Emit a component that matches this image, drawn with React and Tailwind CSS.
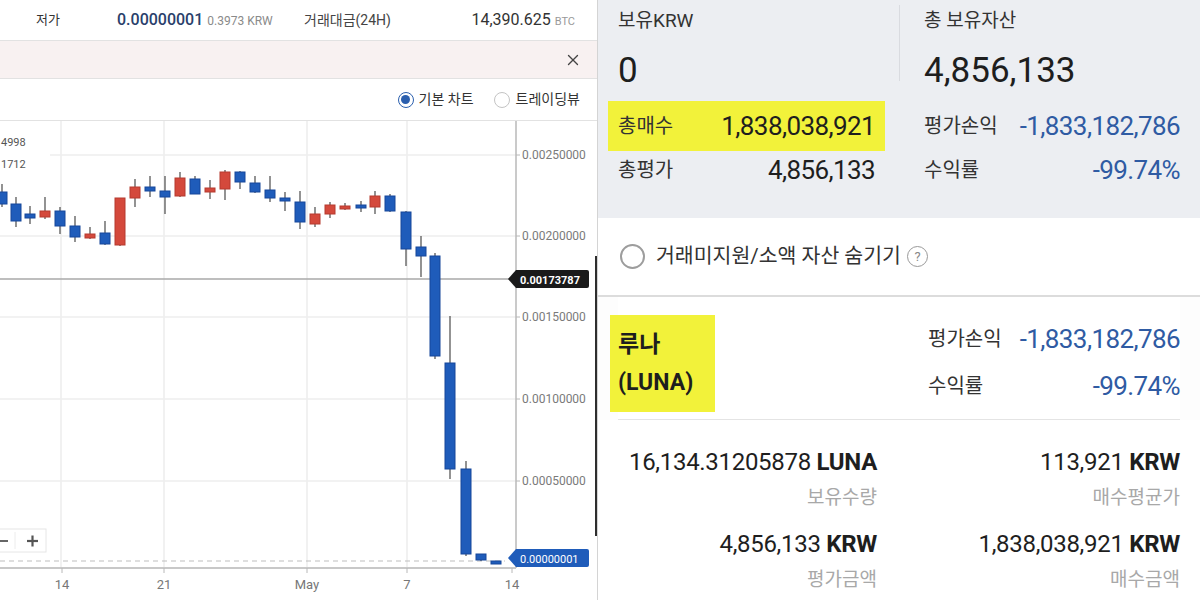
import { X } from "lucide-react";

const candles = [
  [2, 193, 205, 185, 208, "b"],
  [16, 205, 222, 198, 228, "b"],
  [30, 215, 219, 207, 225, "b"],
  [45, 212, 218, 198, 220, "r"],
  [60, 212, 227, 208, 235, "b"],
  [75, 227, 238, 217, 243, "b"],
  [90, 235, 239, 228, 240, "r"],
  [105, 234, 245, 222, 246, "b"],
  [120, 199, 246, 199, 247, "r"],
  [135, 188, 199, 180, 208, "r"],
  [150, 188, 192, 177, 198, "b"],
  [165, 192, 198, 177, 215, "b"],
  [180, 179, 197, 173, 198, "r"],
  [195, 180, 195, 177, 195, "b"],
  [210, 189, 193, 181, 200, "r"],
  [225, 173, 190, 171, 201, "r"],
  [240, 173, 183, 172, 190, "b"],
  [255, 184, 193, 177, 194, "b"],
  [270, 191, 199, 177, 203, "b"],
  [285, 199, 202, 193, 212, "b"],
  [300, 203, 223, 192, 230, "b"],
  [315, 215, 225, 208, 228, "r"],
  [330, 206, 215, 203, 219, "r"],
  [345, 207, 210, 204, 211, "r"],
  [361, 206, 208, 202, 213, "b"],
  [375, 197, 208, 192, 215, "r"],
  [390, 197, 212, 195, 213, "b"],
  [406, 213, 250, 212, 267, "b"],
  [421, 248, 257, 237, 278, "b"],
  [435, 257, 357, 254, 360, "b"],
  [450, 364, 470, 317, 480, "b"],
  [466, 470, 555, 462, 557, "b"],
  [481, 555, 561, 555, 562, "b"],
  [496, 562, 564, 562, 564, "b"],
];

const yLabels = [
  [156, "0.00250000"],
  [237, "0.00200000"],
  [318, "0.00150000"],
  [400, "0.00100000"],
  [482, "0.00050000"],
];

const xLabels = [
  [62, "14"],
  [164, "21"],
  [307, "May"],
  [407, "7"],
  [512, "14"],
];

const font = { fontFamily: "Roboto, 'Noto Sans CJK KR', sans-serif" };

const Chart = () => (
  <svg width="597" height="478" viewBox="0 122 597 478" className="block" style={font}>
    {[61, 164, 307, 407].map((x) => (
      <line key={x} x1={x} y1="122" x2={x} y2="568" stroke="#ececec" strokeWidth="1.5" />
    ))}
    {yLabels.map(([y]) => (
      <line key={y} x1="0" y1={y} x2="516" y2={y} stroke="#eeeeee" strokeWidth="1.5" />
    ))}
    <rect x="0" y="130" width="50" height="42" fill="#fff" />
    <text x="1" y="147" fontSize="11" fill="#555">4998</text>
    <text x="1" y="169" fontSize="11" fill="#555">1712</text>

    <line x1="0" y1="562" x2="505" y2="562" stroke="#bdbdbd" strokeWidth="1" strokeDasharray="5 4" />
    <line x1="0" y1="280" x2="510" y2="280" stroke="#a8a8a8" strokeWidth="1.5" />

    {candles.map(([cx, bt, bb, wt, wb, c]) => {
      const fill = c === "b" ? "#1f5cba" : "#d4493c";
      const stroke = c === "b" ? "#16479a" : "#b53a2f";
      const h = Math.max(bb - bt, 3);
      return (
        <g key={cx}>
          <line x1={cx} y1={wt} x2={cx} y2={wb} stroke="#4a4a4a" strokeWidth="1.2" />
          <rect x={cx - 5} y={bt} width="10" height={h} fill={fill} stroke={stroke} strokeWidth="1" />
        </g>
      );
    })}

    <line x1="516" y1="122" x2="516" y2="569" stroke="#b8b8b8" strokeWidth="1.5" />
    <line x1="0" y1="569" x2="516" y2="569" stroke="#c8c8c8" strokeWidth="2" />
    {yLabels.map(([y, t]) => (
      <g key={t}>
        <line x1="516" y1={y} x2="520" y2={y} stroke="#b8b8b8" />
        <text x="522" y={y + 4} fontSize="12" fill="#7a7a7a">{t}</text>
      </g>
    ))}
    {xLabels.map(([x, t]) => (
      <g key={x}>
        <line x1={x} y1="569" x2={x} y2="574" stroke="#b8b8b8" />
        <text x={x} y="590" textAnchor="middle" fontSize="13" fill="#777">{t}</text>
      </g>
    ))}

    <path d="M508,280 L516,271 L587,271 Q589,271 589,273 L589,287 Q589,289 587,289 L516,289 Z" fill="#1a1a1a" />
    <text x="520" y="284.5" fontSize="11" fontWeight="700" fill="#fff">0.00173787</text>
    <path d="M508,559 L516,550 L587,550 Q589,550 589,552 L589,566 Q589,568 587,568 L516,568 Z" fill="#1f5cba" />
    <text x="520" y="563.5" fontSize="11" fill="#fff">0.00000001</text>

    <rect x="-4" y="530" width="50" height="23" fill="#fff" stroke="#e6e6e6" />
    <line x1="15" y1="533" x2="15" y2="550" stroke="#ececec" />
    <line x1="0" y1="542" x2="8" y2="542" stroke="#666" strokeWidth="2" />
    <line x1="27" y1="542" x2="38" y2="542" stroke="#555" strokeWidth="2.2" />
    <line x1="32.5" y1="536.5" x2="32.5" y2="547.5" stroke="#555" strokeWidth="2.2" />

    <line x1="596" y1="257" x2="596" y2="537" stroke="#2e2e2e" strokeWidth="2" />
  </svg>
);

const Radio = ({ checked }) => (
  <span
    className={`w-[16px] h-[16px] rounded-full border flex items-center justify-center ${
      checked ? "border-[#2b5fae]" : "border-[#c4c4c4]"
    }`}
  >
    {checked && <span className="w-[9px] h-[9px] rounded-full bg-[#2b5fae]" />}
  </span>
);

const StatRow = ({ label, value, blue }) => (
  <div className="h-[38px] flex items-center justify-between">
    <span className="text-[20px] text-[#333]">{label}</span>
    <span className={`text-[26px] tracking-[-0.6px] ${blue ? "text-[#2f5ba3]" : "text-[#1e1e1e]"}`}>
      {value}
    </span>
  </div>
);

const Holding = ({ amount, unit, label }) => (
  <div className="flex flex-col items-end">
    <div className="h-[40px] flex items-center text-[24px] text-[#1e1e1e] tracking-[-0.3px]">
      {amount}&nbsp;<span className="font-bold">{unit}</span>
    </div>
    <div className="h-[32px] flex items-center text-[19px] text-[#a8a8a8]">{label}</div>
  </div>
);

export default function App() {
  return (
    <div className="flex w-[1200px] h-[600px] overflow-hidden bg-white" style={font}>
      {/* chart screen */}
      <div className="w-[598px] flex flex-col bg-white border-r border-[#d4d4d4]">
        <div className="h-[40px] flex items-center text-[13px] shrink-0">
          <span className="w-[117px] pl-[36px] text-[#333]">저가</span>
          <span className="w-[187px] flex items-baseline gap-[4px]">
            <span className="text-[16px] font-medium text-[#2a3f6b]">0.00000001</span>
            <span className="text-[12px] text-[#8a8a8a]">0.3973 KRW</span>
          </span>
          <span className="text-[14px] text-[#444]">거래대금(24H)</span>
          <span className="flex-1 flex items-baseline justify-end gap-[4px] pr-[22px]">
            <span className="text-[16px] text-[#333]">14,390.625</span>
            <span className="text-[11px] text-[#999]">BTC</span>
          </span>
        </div>
        <div className="h-[39px] shrink-0 bg-[#f8f1f1] border-y border-[#e2e2e2] flex items-center justify-end pr-[15px]">
          <X size={18} strokeWidth={1.8} className="text-[#444]" />
        </div>
        <div className="h-[42px] shrink-0 flex items-center justify-end pr-[17px] text-[14px] text-[#333] border-b border-[#e2e2e2]">
          <Radio checked />
          <span className="ml-[5px] mr-[20px]">기본 차트</span>
          <Radio />
          <span className="ml-[6px]">트레이딩뷰</span>
        </div>
        <div className="flex-1 overflow-hidden">
          <Chart />
        </div>
      </div>

      {/* assets screen */}
      <div className="flex-1 flex flex-col bg-[#fdfdfd]">
        <div className="h-[218px] shrink-0 bg-[#eceef2] flex pt-[9px]">
          <div className="ml-[10px] w-[277px] flex flex-col">
            <div className="px-[10px] h-[24px] flex items-center text-[19px] text-[#333]">보유KRW</div>
            <div className="px-[10px] mt-[18px] h-[40px] flex items-center text-[35px] text-[#1e1e1e]">0</div>
            <div className="mt-[10px] h-[50px] bg-[#f2f23a] px-[10px] flex items-center justify-between">
              <span className="text-[20px] text-[#333]">총매수</span>
              <span className="text-[26px] tracking-[-0.6px] text-[#1e1e1e]">1,838,038,921</span>
            </div>
            <div className="px-[10px]">
              <StatRow label="총평가" value="4,856,133" />
            </div>
          </div>
          <div className="ml-[14px] mt-[-4px] w-px h-[76px] bg-[#d9dbe0]" />
          <div className="flex-1 pl-[24px] pr-[20px] flex flex-col">
            <div className="h-[24px] flex items-center text-[19px] text-[#333]">총 보유자산</div>
            <div className="mt-[18px] h-[40px] flex items-center text-[35px] text-[#1e1e1e]">4,856,133</div>
            <div className="mt-[10px] h-[50px] flex items-center justify-between">
              <span className="text-[20px] text-[#333]">평가손익</span>
              <span className="text-[26px] tracking-[-0.6px] text-[#2f5ba3]">-1,833,182,786</span>
            </div>
            <StatRow label="수익률" value="-99.74%" blue />
          </div>
        </div>

        <div className="h-[79px] shrink-0 bg-white flex items-center pl-[22px] border-b-2 border-[#dcdcdc]">
          <span className="w-[25px] h-[25px] rounded-full border-2 border-[#9d9d9d]" />
          <span className="ml-[11px] text-[20.5px] text-[#333]">거래미지원/소액 자산 숨기기</span>
          <span className="ml-[6px] w-[21px] h-[21px] rounded-full border border-[#999] flex items-center justify-center text-[13px] text-[#888]">
            ?
          </span>
        </div>

        <div className="h-[123px] shrink-0 flex pt-[18px] mx-[20px] border-b border-[#e4e4e4] bg-white">
          <div className="-ml-[8px] w-[105px] h-[97px] bg-[#f2f23a] pl-[8px] flex flex-col justify-center font-bold text-[23px] leading-[38px] text-[#1e1e1e]">
            <span>루나</span>
            <span>(LUNA)</span>
          </div>
          <div className="ml-[213px] flex-1 flex flex-col">
            <div className="h-[48px] flex items-center justify-between">
              <span className="text-[20px] text-[#333]">평가손익</span>
              <span className="text-[26px] tracking-[-0.6px] text-[#2f5ba3]">-1,833,182,786</span>
            </div>
            <div className="h-[46px] flex items-center justify-between">
              <span className="text-[20px] text-[#333]">수익률</span>
              <span className="text-[26px] tracking-[-0.6px] text-[#2f5ba3]">-99.74%</span>
            </div>
          </div>
        </div>

        <div className="flex-1 bg-white grid grid-cols-[279px_303px] content-start pt-[22px] gap-y-[10px]">
          <Holding amount="16,134.31205878" unit="LUNA" label="보유수량" />
          <Holding amount="113,921" unit="KRW" label="매수평균가" />
          <Holding amount="4,856,133" unit="KRW" label="평가금액" />
          <Holding amount="1,838,038,921" unit="KRW" label="매수금액" />
        </div>
      </div>
    </div>
  );
}
